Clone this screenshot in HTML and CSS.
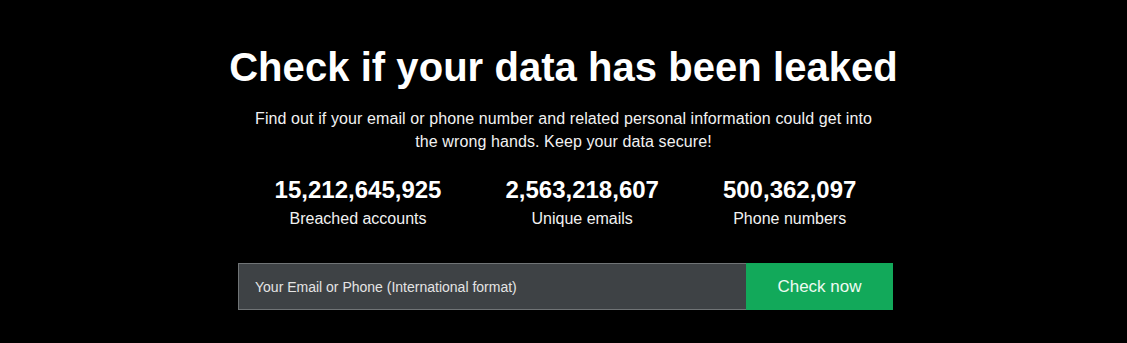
FILE: index.html
```html
<!DOCTYPE html>
<html lang="en">
<head>
<meta charset="utf-8">
<title>Check if your data has been leaked</title>
<link rel="stylesheet" href="styles.css">
</head>
<body>
<main class="hero">
  <h1 class="title">Check if your data has been leaked</h1>
  <p class="lead">Find out if your email or phone number and related personal information could get into<br>the wrong hands. Keep your data secure!</p>
  <div class="stats">
    <div class="stat"><div class="num">15,212,645,925</div><div class="label">Breached accounts</div></div>
    <div class="stat"><div class="num">2,563,218,607</div><div class="label">Unique emails</div></div>
    <div class="stat"><div class="num">500,362,097</div><div class="label">Phone numbers</div></div>
  </div>
  <form class="search">
    <input class="field" type="text" placeholder="Your Email or Phone (International format)">
    <button class="btn" type="button">Check now</button>
  </form>
</main>
</body>
</html>
```
FILE: styles.css
```css
html, body {
  margin: 0;
  padding: 0;
  background: #000;
}
body {
  font-family: "Liberation Sans", Arial, Helvetica, sans-serif;
  color: #fff;
  width: 1127px;
  height: 343px;
  overflow: hidden;
}
.hero {
  display: flex;
  flex-direction: column;
  align-items: center;
  padding-top: 44px;
}
.title {
  margin: 0;
  font-size: 40px;
  font-weight: bold;
  line-height: 46px;
  letter-spacing: 0.05px;
}
.lead {
  margin: 17px 0 0;
  font-size: 16px;
  line-height: 23px;
  text-align: center;
  color: #f2f2f2;
  letter-spacing: 0.1px;
}
.stats {
  display: flex;
  gap: 64px;
  margin-top: 23px;
  margin-left: 4px;
}
.stat {
  display: flex;
  flex-direction: column;
  align-items: center;
}
.num {
  font-size: 24px;
  font-weight: bold;
  line-height: 28px;
}
.label {
  font-size: 16px;
  line-height: 20px;
  margin-top: 5px;
  color: #f2f2f2;
}
.search {
  display: flex;
  margin-top: 34px;
  margin-left: 4px;
  height: 47px;
}
.field {
  box-sizing: border-box;
  width: 508px;
  height: 47px;
  margin: 0;
  padding: 0 16px;
  background: #3e4245;
  border: 1px solid #707476;
  border-right: none;
  color: #fff;
  font-family: "Liberation Sans", Arial, Helvetica, sans-serif;
  font-size: 14px;
  outline: none;
}
.field::placeholder {
  color: #e4e4e4;
  opacity: 1;
}
.btn {
  box-sizing: border-box;
  width: 147px;
  height: 47px;
  margin: 0;
  border: none;
  background: #12a95a;
  color: #eefbf2;
  font-family: "Liberation Sans", Arial, Helvetica, sans-serif;
  font-size: 17px;
  cursor: pointer;
}
```
